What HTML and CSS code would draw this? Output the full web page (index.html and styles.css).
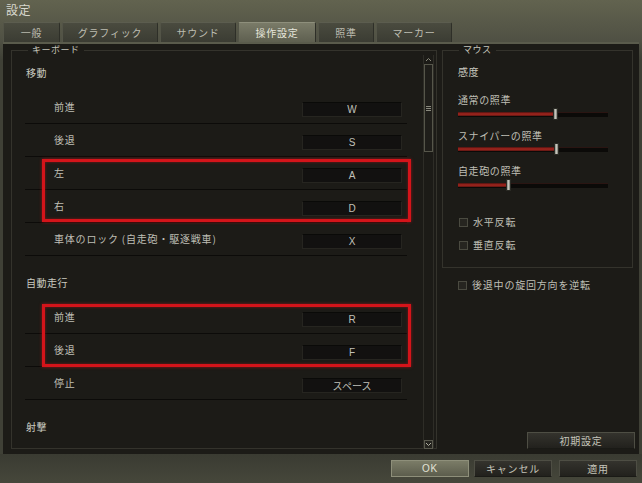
FILE: index.html
```html
<!DOCTYPE html>
<html lang="ja">
<head>
<meta charset="utf-8">
<title>設定</title>
<link rel="stylesheet" href="styles.css">
</head>
<body>
<div class="window">
  <div class="titlebar"><span class="title">設定</span></div>
  <div class="tabs">
    <div class="tab t1">一般</div>
    <div class="tab t2">グラフィック</div>
    <div class="tab t3">サウンド</div>
    <div class="tab t4 active">操作設定</div>
    <div class="tab t5">照準</div>
    <div class="tab t6">マーカー</div>
  </div>
  <div class="main">
    <div class="panel kb">
      <span class="legend">キーボード</span>
      <div class="list">
        <div class="cat first">移動</div>
        <div class="row"><span class="lbl">前進</span><span class="key">W</span></div>
        <div class="row"><span class="lbl">後退</span><span class="key">S</span></div>
        <div class="hl hl1">
          <div class="row"><span class="lbl">左</span><span class="key">A</span></div>
          <div class="row"><span class="lbl">右</span><span class="key">D</span></div>
        </div>
        <div class="row"><span class="lbl">車体のロック (自走砲・駆逐戦車)</span><span class="key">X</span></div>
        <div class="cat">自動走行</div>
        <div class="hl hl2">
          <div class="row"><span class="lbl">前進</span><span class="key">R</span></div>
          <div class="row"><span class="lbl">後退</span><span class="key">F</span></div>
        </div>
        <div class="row"><span class="lbl">停止</span><span class="key">スペース</span></div>
        <div class="cat">射撃</div>
      </div>
      <div class="scroll">
        <div class="arrow up">
          <svg width="7" height="5" viewBox="0 0 7 5"><path d="M1 4 L3.5 1.5 L6 4" fill="none" stroke="#8a8a7c" stroke-width="1"/></svg>
        </div>
        <div class="thumb"><span class="grip"></span></div>
        <div class="track"></div>
        <div class="arrow down">
          <svg width="7" height="5" viewBox="0 0 7 5"><path d="M1 1 L3.5 3.5 L6 1" fill="none" stroke="#b0b0a2" stroke-width="1"/></svg>
        </div>
      </div>
    </div>
    <div class="side">
      <div class="panel mouse">
        <span class="legend">マウス</span>
        <div class="m-title">感度</div>
        <div class="s-label l1">通常の照準</div>
        <div class="slider s1"><div class="fill" style="width:96px"></div><div class="handle" style="left:95px"></div></div>
        <div class="s-label l2">スナイパーの照準</div>
        <div class="slider s2"><div class="fill" style="width:97px"></div><div class="handle" style="left:96px"></div></div>
        <div class="s-label l3">自走砲の照準</div>
        <div class="slider s3"><div class="fill" style="width:49px"></div><div class="handle" style="left:48px"></div></div>
        <label class="check c1"><span class="box"></span>水平反転</label>
        <label class="check c2"><span class="box"></span>垂直反転</label>
      </div>
      <label class="check c3"><span class="box"></span>後退中の旋回方向を逆転</label>
      <div class="btn reset">初期設定</div>
    </div>
  </div>
  <div class="footer">
    <div class="btn ok">OK</div>
    <div class="btn">キャンセル</div>
    <div class="btn apply">適用</div>
  </div>
</div>
</body>
</html>
```
FILE: styles.css
```css
* { box-sizing: border-box; }
html, body { margin: 0; padding: 0; }
body {
  width: 642px;
  height: 483px;
  overflow: hidden;
  background: #3c3d33;
  font-family: "Noto Sans CJK JP", "Liberation Sans", sans-serif;
  font-size: 10px;
  color: #c6c6bc;
}
.window {
  width: 642px;
  height: 483px;
  display: flex;
  flex-direction: column;
  background: linear-gradient(#62634f 0px, #505144 40px, #3f4036 60px);
}
.titlebar {
  height: 22px;
  padding-left: 6px;
  display: flex;
  align-items: center;
}
.title {
  font-size: 12px;
  letter-spacing: 0.5px;
  color: #d8d8ce;
  line-height: 14px;
  margin-top: -3px;
}
.tabs {
  height: 20px;
  display: flex;
  gap: 2px;
  padding-left: 3px;
}
.tab {
  height: 20px;
  display: flex;
  align-items: center;
  justify-content: center;
  background: linear-gradient(#4a4b3f, #3b3c33);
  border: 1px solid #2e2f28;
  border-top-color: #5c5d4f;
  border-left-color: #535447;
  border-bottom: none;
  border-radius: 2px 2px 0 0;
  color: #bdbdb1;
  letter-spacing: 0.8px;
  font-size: 10px;
}
.t1 { width: 57px; }
.t2 { width: 96px; }
.t3 { width: 76px; }
.t4 { width: 78px; }
.t5 { width: 56px; }
.t6 { width: 76px; }
.tab.active {
  background: linear-gradient(#7a7b68, #5e5f50);
  border-top-color: #8e8f7c;
  color: #e6e6dc;
}
.main {
  height: 412px;
  margin: 0 3px;
  border-top: 2px solid #5a5b4c;
  background: #1c1b17;
  display: flex;
  padding: 6px 0 0 8px;
}
.panel {
  position: relative;
  border: 1px solid #34332c;
}
.legend {
  position: absolute;
  top: -7px;
  background: #1c1b17;
  padding: 0 4px;
  font-size: 9px;
  line-height: 12px;
  color: #c4c4ba;
  letter-spacing: 0.5px;
}
.kb {
  width: 426px;
  height: 399px;
  display: flex;
}
.kb .legend { left: 16px; }
.list {
  width: 390px;
  margin-left: 13px;
  overflow: hidden;
  height: 397px;
}
.cat {
  width: 382px;
  height: 45px;
  display: flex;
  align-items: flex-end;
  padding-bottom: 12px;
  padding-left: 1px;
  font-size: 10px;
  color: #cbcbc1;
  letter-spacing: 0.5px;
  line-height: 12px;
}
.cat.first { height: 40px; }
.row {
  width: 382px;
  height: 33px;
  border-bottom: 1px solid #0c0b09;
  display: flex;
  align-items: center;
  justify-content: space-between;
  padding-left: 29px;
  padding-right: 5px;
}
.lbl {
  letter-spacing: 0.8px;
  color: #bfbfb5;
  line-height: 12px;
  margin-top: -1px;
}
.key {
  width: 100px;
  height: 15px;
  background: #121110;
  border: 1px solid #262520;
  border-top-color: #0a0a08;
  display: flex;
  align-items: center;
  justify-content: center;
  font-size: 10px;
  color: #c0c0b8;
  font-family: "Liberation Sans", "Noto Sans CJK JP", sans-serif;
  margin-top: 5px;
}
.hl { position: relative; width: 382px; }
.hl::after {
  content: "";
  position: absolute;
  left: 17px;
  right: -4px;
  border: 3px solid #d4141a;
  box-shadow: 0 0 3px rgba(220, 20, 26, 0.6), inset 0 0 3px rgba(220, 20, 26, 0.5);
  pointer-events: none;
}
.hl1::after { top: 2px; bottom: 1px; }
.hl2::after { top: 3px; bottom: 0; }
.scroll {
  width: 11px;
  margin-left: 8px;
  margin-top: 4px;
  height: 394px;
  display: flex;
  flex-direction: column;
  border-left: 1px solid #2e2d27;
  border-right: 1px solid #2e2d27;
}
.arrow {
  height: 9px;
  display: flex;
  align-items: center;
  justify-content: center;
}
.arrow.down {
  border: 1px solid #5a5a4e;
  background: #24231e;
}
.thumb {
  height: 88px;
  border: 1px solid #56564a;
  background: #1f1e1a;
  display: flex;
  align-items: center;
  justify-content: center;
}
.grip {
  width: 5px;
  height: 5px;
  border-top: 1px solid #8a8a7e;
  border-bottom: 1px solid #8a8a7e;
  position: relative;
}
.grip::after {
  content: "";
  position: absolute;
  left: 0;
  right: 0;
  top: 1px;
  border-top: 1px solid #8a8a7e;
}
.track { flex: 1; }
.side {
  margin-left: 5px;
  width: 194px;
  display: flex;
  flex-direction: column;
}
.mouse {
  width: 191px;
  height: 218px;
  padding-left: 15px;
  padding-top: 1px;
}
.mouse .legend { left: 16px; }
.m-title {
  margin-top: 14px;
  line-height: 12px;
  color: #cbcbc1;
  letter-spacing: 0.5px;
}
.s-label {
  line-height: 12px;
  letter-spacing: 0.6px;
  color: #bfbfb5;
}
.l1 { margin-top: 16px; }
.l2, .l3 { margin-top: 10px; }
.slider {
  position: relative;
  width: 150px;
  height: 12px;
  margin-top: 2px;
}
.s2 { margin-top: 1px; }
.slider::before {
  content: "";
  position: absolute;
  left: 0;
  right: 0;
  top: 4px;
  height: 4px;
  background: #0b0a08;
  border-top: 1px solid #2a1512;
}
.fill {
  position: absolute;
  left: 0;
  top: 4px;
  height: 4px;
  background: linear-gradient(#4a1210, #a8261e 50%, #5a1612);
}
.handle {
  position: absolute;
  top: 0;
  width: 5px;
  height: 12px;
  background: linear-gradient(90deg, #8a8a80, #c4c4bc 50%, #7a7a70);
  border: 1px solid #2a2a24;
}
.check {
  display: flex;
  align-items: center;
  gap: 5px;
  line-height: 12px;
  letter-spacing: 0.8px;
  color: #bfbfb5;
}
.box {
  width: 9px;
  height: 9px;
  border: 1px solid #4a4a40;
  background: #262520;
  margin-left: 1px;
}
.c1 { margin-top: 25px; }
.c2 { margin-top: 11px; }
.c3 { margin-top: 11px; margin-left: 15px; }
.btn {
  width: 78px;
  height: 17px;
  display: flex;
  align-items: center;
  justify-content: center;
  background: linear-gradient(#34332d, #22211d);
  border: 1px solid #4e4e44;
  border-bottom-color: #1a1a16;
  color: #c4c4ba;
  letter-spacing: 0.8px;
  font-size: 10px;
}
.reset {
  width: 108px;
  margin-top: auto;
  margin-bottom: 5px;
  margin-left: 85px;
}
.footer {
  height: 29px;
  display: flex;
  justify-content: flex-end;
  align-items: center;
  gap: 5px;
  padding-right: 5px;
  background: linear-gradient(#3a3b32, #46473b);
}
.btn.ok {
  background: linear-gradient(#7b7c67, #5c5d4d);
  border-color: #8e8f7a;
  color: #e2e2d6;
  font-family: "Liberation Sans", sans-serif;
}
.btn.apply { margin-left: 2px; }
```
